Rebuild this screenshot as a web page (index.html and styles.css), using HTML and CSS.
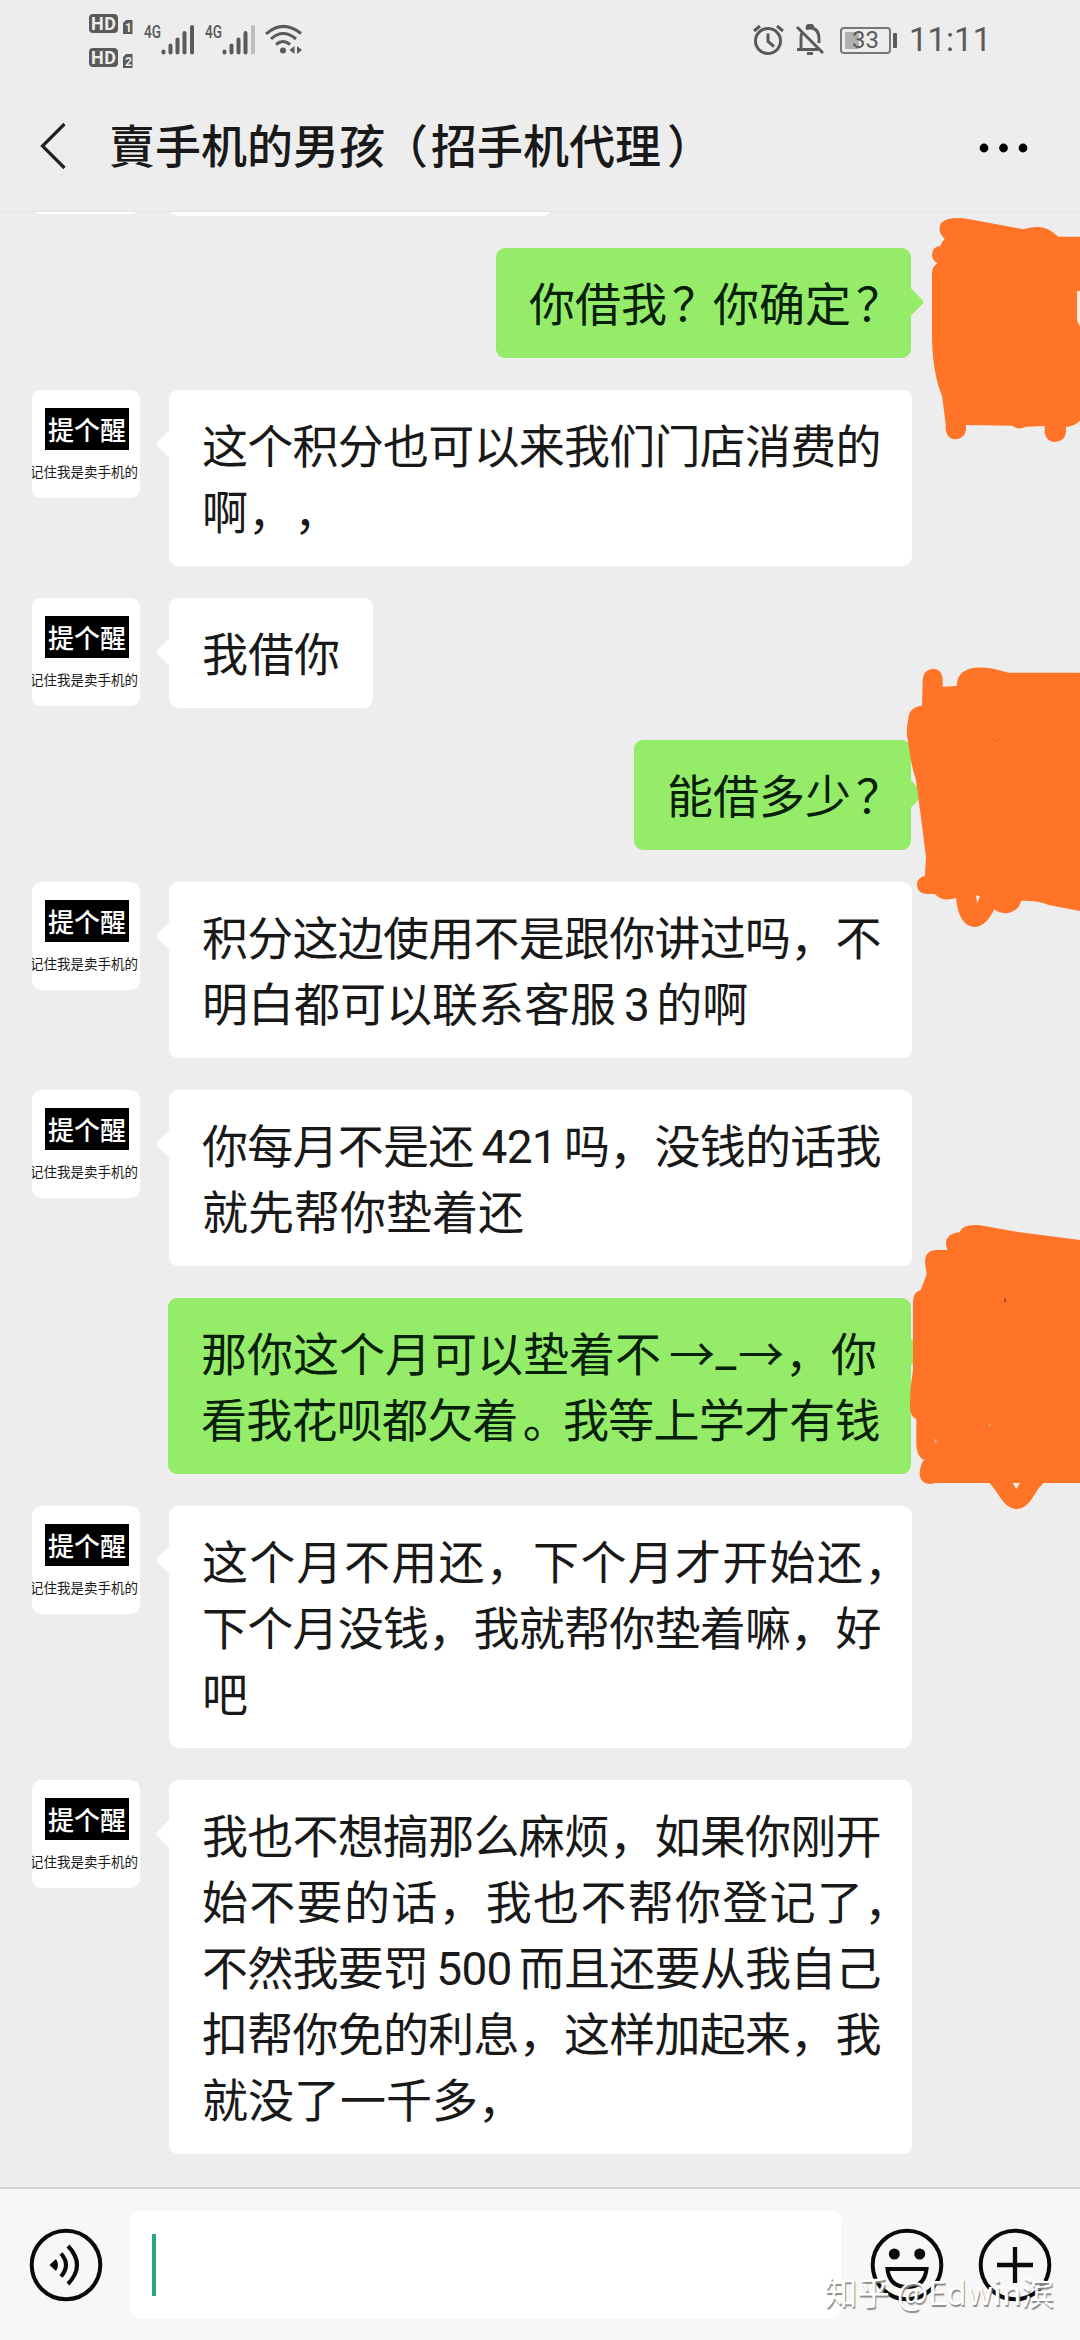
FILE: index.html
```html
<!DOCTYPE html>
<html lang="zh-CN">
<head>
<meta charset="utf-8">
<title>賣手机的男孩</title>
<link rel="stylesheet" href="styles.css">
</head>
<body>
<div class="screen">
  <div class="statusbar">
    <svg class="hd" width="45" height="56" viewBox="0 0 45 56">
      <g fill="#5a5a5a">
        <rect x="0" y="1" width="29" height="19" rx="4"/><rect x="0" y="35" width="29" height="19" rx="4"/>
        <path d="M34 10l3-3h6.500v14H34zM34 44l3-3h6.500v14H34z"/>
      </g>
      <g class="hd-text"><text x="2" y="16.500" textLength="25">HD</text><text x="2" y="50.500" textLength="25">HD</text></g>
      <g class="sim-text"><text x="36" y="19">1</text><text x="36" y="53">2</text></g>
    </svg>
    <svg class="signal" width="51" height="32" viewBox="0 0 51 32">
      <text class="net" x="0" y="14" textLength="17" lengthAdjust="spacingAndGlyphs">4G</text>
      <path class="bars" d="M19.500 27.500v1M26.500 21.500v7M33.500 15.500v13M40.500 9v19.500M48 3v25.500"/>
    </svg>
    <svg class="signal" width="51" height="32" viewBox="0 0 51 32">
      <text class="net" x="0" y="14" textLength="17" lengthAdjust="spacingAndGlyphs">4G</text>
      <path class="bars" d="M19.500 27.500v1M26.500 21.500v7M33.500 15.500v13M40.500 9v19.500"/>
      <path class="bars dim" d="M48 3v25.500"/>
    </svg>
    <svg class="wifi" width="38" height="32" viewBox="0 0 38 32" fill="none" stroke="#5a5a5a" stroke-width="3">
      <path d="M1 10Q18 -5 36 9.500M6 15Q18 4 31 15M11 20.500Q18 14.500 25 20.500"/>
      <circle cx="18" cy="26.500" r="3" fill="#5a5a5a" stroke="none"/>
      <path d="M29.500 22v8l-5-4zM32 22v8l5-4z" fill="#5a5a5a" stroke="none"/>
    </svg>
    <div class="status-right">
      <svg width="31" height="32" viewBox="0 0 31 32" fill="none" stroke="#5a5a5a" stroke-width="3">
        <circle cx="15" cy="17" r="12.500"/><path d="M15 9.500v8l6 5M1 7l6-5M24 2l6 5"/>
      </svg>
      <svg class="bell" width="29" height="32" viewBox="0 0 29 32" fill="none" stroke="#5a5a5a" stroke-width="2.900">
        <path d="M1 3l26 26M1 25.500h21M5 25V13q0-3 1.500-5M10 5q2-1 4-1 9 0 9 11v4M11 4q0-3 3-3t3 3"/><path d="M11 29.500h6"/>
      </svg>
      <div class="battery"><span class="level"></span><span class="pct">33</span></div>
      <span class="clock">11:11</span>
    </div>
  </div>
  <div class="titlebar">
    <svg class="back" width="28" height="48" viewBox="0 0 28 48" fill="none" stroke="#222" stroke-width="3.200"><path d="M25.500 2L3.500 24l22 22"/></svg>
    <h1>賣手机的男孩<span class="open">（</span>招手机代理<span class="close">）</span></h1>
    <svg class="more" width="50" height="12" viewBox="0 0 50 12"><circle cx="5" cy="6" r="4.400"/><circle cx="24.500" cy="6" r="4.400"/><circle cx="44" cy="6" r="4.400"/></svg>
  </div>

  <div class="chat">
    <div class="row in"><div class="avatar"></div><div class="bubble cut"></div></div>
    <div class="row out"><div class="bubble ask"><p>你借我<span class="q">？</span>你确定<span class="q">？</span></p></div></div>
    <div class="row in"><div class="avatar"><b>提个醒</b><i>记住我是卖手机的</i></div>
      <div class="bubble full"><p class="tight">这个积分也可以来我们门店消费的</p><p>啊，，</p></div></div>
    <div class="row in"><div class="avatar"><b>提个醒</b><i>记住我是卖手机的</i></div>
      <div class="bubble"><p>我借你</p></div></div>
    <div class="row out"><div class="bubble much"><p>能借多少<span class="q">？</span></p></div></div>
    <div class="row in"><div class="avatar"><b>提个醒</b><i>记住我是卖手机的</i></div>
      <div class="bubble full"><p class="tight">积分这边使用不是跟你讲过吗，不</p><p>明白都可以联系客服<span class="num">3</span>的啊</p></div></div>
    <div class="row in"><div class="avatar"><b>提个醒</b><i>记住我是卖手机的</i></div>
      <div class="bubble full"><p class="tight">你每月不是还<span class="num">421</span>吗，没钱的话我</p><p>就先帮你垫着还</p></div></div>
    <div class="row out"><div class="bubble full">
      <p>那你这个月可以垫着不<span class="arrow first">→</span><span class="bar">_</span><span class="arrow">→</span>，你</p><p class="tight">看我花呗都欠着<span class="q">。</span>我等上学才有钱</p></div></div>
    <div class="row in"><div class="avatar"><b>提个醒</b><i>记住我是卖手机的</i></div>
      <div class="bubble full"><p class="loose">这个月不用还，下个月才开始还，</p><p class="tight">下个月没钱，我就帮你垫着嘛，好</p><p>吧</p></div></div>
    <div class="row in"><div class="avatar"><b>提个醒</b><i>记住我是卖手机的</i></div>
      <div class="bubble full"><p class="tight">我也不想搞那么麻烦，如果你刚开</p><p class="loose">始不要的话，我也不帮你登记了，</p><p class="tight">不然我要罚<span class="num">500</span>而且还要从我自己</p><p class="tight">扣帮你免的利息，这样加起来，我</p><p>就没了一千多，</p></div></div>
  </div>

  <div class="inputbar">
    <svg class="ico" width="74" height="74" viewBox="-37 -37 74 74" fill="none" stroke="#0a0a0a" stroke-width="4">
      <circle r="34.300"/><path d="M-16.500 0L-10-6Q-6 0-10 6z" fill="#0a0a0a" stroke="none"/><path d="M-5-11.500Q5 0-5 11.500M2-19Q20 0 2 19"/>
    </svg>
    <div class="field"><span class="caret"></span></div>
    <svg class="ico smile" width="74" height="74" viewBox="-37 -37 74 74" fill="none" stroke="#0a0a0a" stroke-width="4">
      <circle r="34.300"/><circle cx="-12.700" cy="-11" r="5.500" fill="#0a0a0a" stroke="none"/><circle cx="12.700" cy="-11" r="5.500" fill="#0a0a0a" stroke="none"/>
      <path d="M-19.500 4h39q-2 18-19.500 18t-19.500-18z"/>
    </svg>
    <svg class="ico plus" width="74" height="74" viewBox="-37 -37 74 74" fill="none" stroke="#0a0a0a" stroke-width="4.300">
      <circle r="34.300" stroke-width="4"/><path d="M0-18v36M-18 0h36"/>
    </svg>
  </div>

  <!-- marker strokes over the sender's avatars -->
  <svg class="marker" width="200" height="1340" viewBox="880 200 200 1340">
    <g fill="#ff7427">
      <g transform="translate(900 90) scale(.33333)">
        <path d="M540 440H475Q440 405 400 412Q385 414 370 418L205 387Q150 377 125 397Q108 420 134 447Q124 456 122 467Q96 470 96 495Q98 512 112 520Q96 530 96 550V745Q98 850 126 918L137 1000V1018Q140 1048 168 1048Q196 1046 198 1018V1005L337 1007Q355 1022 378 1010L434 1008V1028Q440 1056 466 1056Q495 1054 498 1026V1011Q525 1008 540 992Z"/>
        <path d="M540 603h-9v85q2 12 9 20z" fill="#fcebdf"/>
      </g>
      <g transform="translate(880 650) scale(.33333)">
        <path d="M600 68H385Q290 38 250 65Q230 78 231 107Q210 110 188 110V85Q185 57 158 56Q130 60 128 88L126 167Q85 172 85 208Q76 240 85 280Q93 345 108 390L120 480L138 620L135 677Q111 682 111 705Q113 733 145 732H165Q185 757 228 744Q237 832 287 831Q318 829 343 778Q360 792 385 789Q417 782 423 753Q465 750 510 766L600 783Z"/>
        <path d="M288 735l12 5-9 19z" fill="#f6ede7"/><path d="M337 268h4M349 272h3M358 265h2" stroke="#a06027" stroke-width="3"/>
      </g>
      <g transform="translate(880 1210) scale(.33333)">
        <path d="M600 90L415 66L300 46Q250 40 238 67Q195 72 198 105L202 120H165Q130 125 136 165L140 193L122 240Q99 247 99 275V480Q90 530 90 580Q87 617 109 628V700Q109 740 132 750Q119 765 119 795Q123 822 152 822L165 819H328Q340 830 360 862Q382 897 410 898Q438 896 460 860Q473 835 490 819H600Z"/>
        <path d="M398 819h22l-11 18z" fill="#f0f0f0"/><path d="M164 684l8 14-7 1zM328 636l5 10-5 2z" fill="#d9b9a2"/><path d="M374 262l4 10-4 7z" fill="#432a17"/>
      </g>
    </g>
  </svg>
  <div class="watermark">知乎 @Edwin滨</div>
</div>
</body>
</html>
```
FILE: styles.css
```css
* { box-sizing: border-box; margin: 0; padding: 0; }
body { background: #ededed; }
.screen {
  position: relative;
  width: 1080px; height: 2340px;
  display: flex; flex-direction: column;
  overflow: hidden;
  background: #ededed;
  color: #191919;
  font-family: "Noto Sans CJK SC", sans-serif;
  text-spacing-trim: space-all;
}
svg { display: block; flex: none; }

.statusbar { height: 80px; padding: 0 93px 0 89px; display: flex; align-items: center; }
.hd { margin-top: 1px; }
.hd-text { fill: #ededed; font: 700 18px Roboto, sans-serif; }
.sim-text { fill: #ededed; font: 700 12px Roboto, sans-serif; }
.signal { margin-left: 10px; }
.net { fill: #5a5a5a; font: 500 18px Roboto, sans-serif; }
.bars { fill: none; stroke: #5a5a5a; stroke-width: 4; stroke-linecap: round; }
.dim { stroke: #bdbdbd; }
.wifi { margin-left: 9px; }
.status-right { margin-left: auto; display: flex; align-items: center; }
.bell { margin-left: 12px; }
.battery {
  position: relative;
  width: 51px; height: 27px; margin: 0 18px 0 15px; padding: 3px;
  display: flex;
  border: 2px solid #777; border-radius: 4px;
}
.battery::after { content: ""; position: absolute; right: -8px; top: 4px; width: 4px; height: 15px; border-radius: 1px; background: #5a5a5a; }
.level { width: 14px; height: 17px; background: #b0b0b0; }
.pct { position: absolute; left: 10px; top: -1px; font: 400 24px/25px Roboto, sans-serif; color: #5a5a5a; }
.clock { width: 78px; font: 400 33px/40px Roboto, sans-serif; color: #5a5a5a; white-space: nowrap; }

.titlebar {
  height: 132px; padding: 0 51px 0 39px;
  display: flex; align-items: center;
  border-bottom: 1px solid #e4e4e4;
}
.titlebar h1 { margin: -5px 0 0 42px; font-size: 46px; line-height: 66px; font-weight: 500; white-space: nowrap; }
.open { margin: 0 3px 0 -3px; }
.close { margin-left: 6px; }
.more { margin-left: auto; margin-top: 4px; fill: #000; }

.chat {
  height: 1975px; padding-bottom: 33px;
  display: flex; flex-direction: column; justify-content: flex-end; gap: 32px;
  overflow: hidden;
}
.row { flex: none; display: flex; align-items: flex-start; }
.in { padding-left: 32px; gap: 29px; }
.out { padding-right: 169px; justify-content: flex-end; }
.avatar {
  width: 108px; height: 108px; padding-top: 18px; flex: none;
  border-radius: 9px; background: #fff; overflow: hidden;
}
.avatar b {
  display: block; width: 84px; height: 42px; margin-left: 13px;
  background: #000; color: #fff;
  font-size: 26px; line-height: 42px; font-weight: 500; text-align: center; white-space: nowrap;
}
.avatar i { display: block; margin: 11px 0 0 -2px; font-size: 13.500px; line-height: 20px; font-style: normal; white-space: nowrap; }
.bubble {
  position: relative;
  padding: 20px 33px 24px;
  border-radius: 9px; background: #fff;
  font-size: 46px; line-height: 66px; white-space: nowrap;
}
.bubble p { height: 66px; }
.bubble::before {
  content: ""; position: absolute; left: -9px; top: 43px;
  width: 22px; height: 22px; border-radius: 3px;
  background: inherit; transform: rotate(45deg);
}
.out .bubble { background: #95ec69; color: #07200a; }
.out .bubble::before { left: auto; right: -9px; }
.full { width: 743px; }
.ask { width: 415px; }
.much { width: 277px; }
.cut { width: 383px; height: 110px; }
.tight { letter-spacing: -.75px; }
.loose { letter-spacing: 1.300px; }
.q { margin: 0 -5px 0 5px; }
.num { font-family: Roboto, sans-serif; line-height: 1; letter-spacing: -.7px; margin: 0 7px 0 8px; }
.arrow, .bar { display: inline-block; height: 66px; vertical-align: top; text-align: center; }
.arrow { width: 48px; }
.first { width: 54px; text-align: right; }
.bar { width: 22px; font-family: Roboto, sans-serif; }

.inputbar {
  height: 153px; padding: 0 27px 0 29px;
  display: flex; align-items: center;
  border-top: 2px solid #d2d2d2; background: #f7f7f7;
}
.field { width: 711px; height: 108px; margin-left: 27px; padding-left: 22px; display: flex; align-items: center; border-radius: 9px; background: #fff; }
.caret { width: 4px; height: 62px; background: #2fa878; }
.smile { margin-left: 29px; }
.plus { margin-left: 34px; }

.marker { position: absolute; left: 880px; top: 200px; }
.watermark {
  position: absolute; right: 26px; top: 2269px;
  font-size: 32.500px; line-height: 44px; color: #fff; white-space: nowrap;
  text-shadow: 1px 2px 1px #8a8a8a;
}
```
